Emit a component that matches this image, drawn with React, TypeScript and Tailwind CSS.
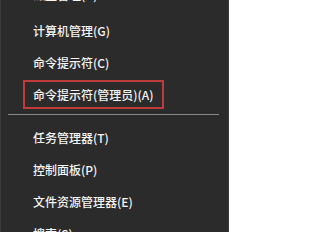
import React from "react";

const font = { fontFamily: '"Noto Sans CJK SC", "Liberation Sans", sans-serif' };

const Item: React.FC<{ label: string; boxed?: boolean; className?: string }> = ({ label, boxed, className = "" }) => (
  <div className={`flex h-[32px] items-center ${boxed ? "pl-[22px]" : "pl-[32px]"} ${className}`}>
    {boxed ? (
      <span className="border-2 border-[#c03a3c] px-[8px] py-[4px] leading-[17px]">{label}</span>
    ) : (
      <span className="leading-[17px]">{label}</span>
    )}
  </div>
);

export default function App() {
  return (
    <div
      className="h-[232px] w-[229px] overflow-hidden border-x border-x-[#3a3a3a] bg-[#2b2b2b] text-[12px] font-medium text-[#f4f4f4]"
      style={font}
    >
      <div className="-mt-[18px] flex flex-col">
        <Item label="磁盘管理(K)" className="-mt-[4px] mb-[4px]" />
        <Item label="计算机管理(G)" />
        <Item label="命令提示符(C)" />
        <Item label="命令提示符(管理员)(A)" boxed />
        <div className="mt-[4px] mb-[6px] ml-[7px] mr-[9px] h-px bg-[#8a8a8a]" />
        <Item label="任务管理器(T)" />
        <Item label="控制面板(P)" />
        <Item label="文件资源管理器(E)" />
        <Item label="搜索(S)" />
      </div>
    </div>
  );
}
